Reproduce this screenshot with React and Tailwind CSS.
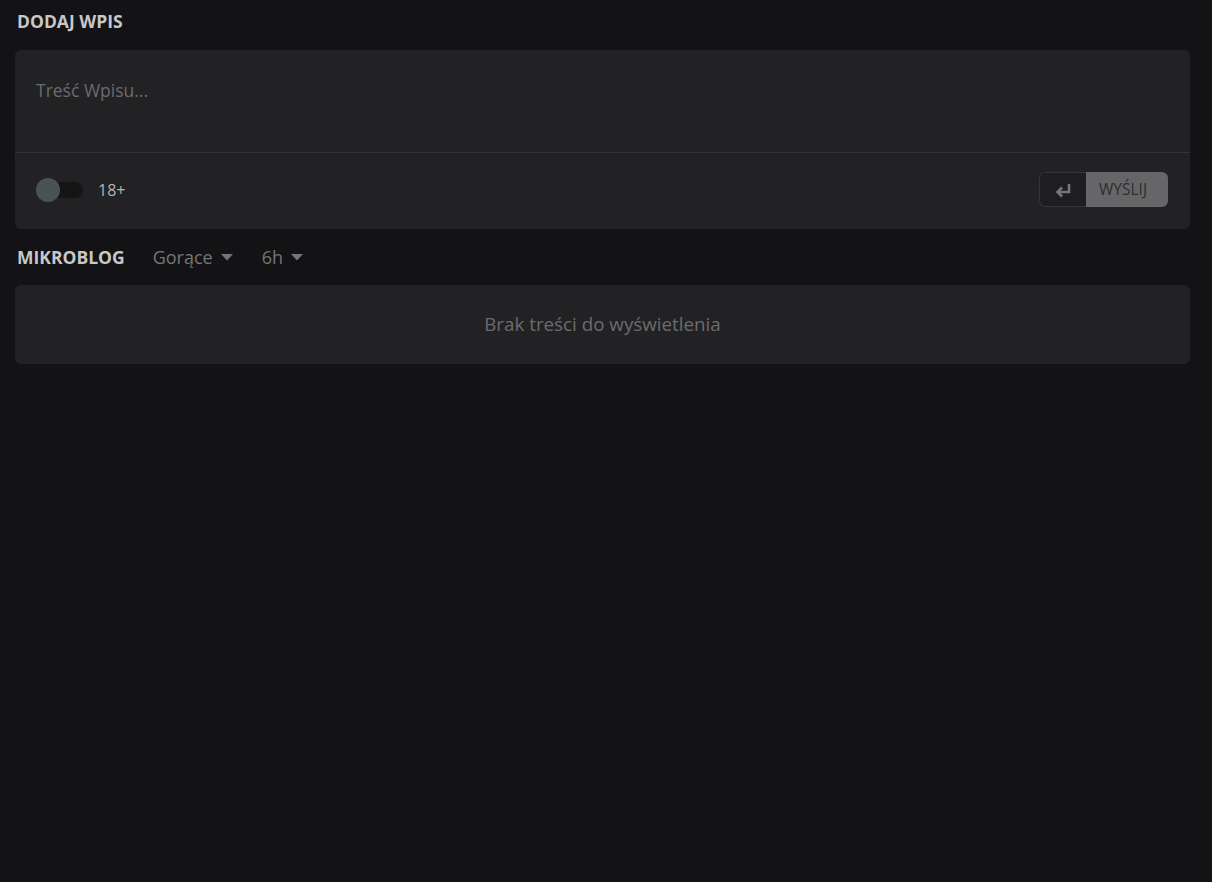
import React from "react";

const Caret = () => (
  <svg width="12" height="7" viewBox="0 0 12 7" className="ml-2" fill="currentColor">
    <path d="M0 0h12L6 6.5z" />
  </svg>
);

const EnterIcon = () => (
  <svg width="18" height="16" viewBox="0 0 18 16" fill="none" stroke="currentColor" strokeWidth="2.6">
    <path d="M15 2v8H4" />
    <path d="M8 5.5L3.5 10L8 14.5" />
  </svg>
);

const App = () => {
  return (
    <div
      className="min-h-[882px] bg-[#131315] pl-[15px] pr-[22px] pt-[8px]"
      style={{ fontFamily: '"Open Sans", "Noto Sans", sans-serif' }}
    >
      <h2 className="pl-[2px] text-[17.5px] font-bold leading-[26px] text-[#c8c8c8]">
        DODAJ WPIS
      </h2>

      <div className="mt-[16px] rounded-md bg-[#222224]">
        <div className="h-[103px] border-b border-[#333335] px-[21px] pt-[26px]">
          <p className="text-[17.5px] leading-[28px] text-[#6b6b6d]">Treść Wpisu...</p>
        </div>
        <div className="flex h-[76px] items-center justify-between pb-[3px] pl-[21px] pr-[22px]">
          <div className="flex items-center">
            <div className="relative h-[16px] w-[47px] rounded-full bg-[#151516]">
              <div className="absolute left-0 top-[-4px] h-[24px] w-[24px] rounded-full bg-[#4b5255]" />
            </div>
            <span className="ml-[15px] text-[16px] text-[#b4b4b4]">18+</span>
          </div>
          <div className="flex h-[35px] overflow-hidden rounded-md">
            <button className="flex w-[47px] items-center justify-center rounded-l-md border border-r-0 border-[#353537] bg-[#1e1e20] text-[#77777a]">
              <EnterIcon />
            </button>
            <button className="flex w-[82px] items-center justify-start bg-[#666668] pl-[13px] text-[15.5px] text-[#2e2e30]">
              WYŚLIJ
            </button>
          </div>
        </div>
      </div>

      <div className="mt-[14px] flex items-center pl-[2px] text-[18px] leading-[28px]">
        <span className="text-[17.5px] font-bold text-[#c8c8c8]">MIKROBLOG</span>
        <span className="ml-[28px] flex items-center text-[#757577]">
          Gorące
          <Caret />
        </span>
        <span className="ml-[29px] flex items-center text-[#757577]">
          6h
          <Caret />
        </span>
      </div>

      <div className="mt-[14px] flex h-[79px] items-center justify-center rounded-md bg-[#222224]">
        <p className="text-[18.8px] text-[#6b6b6d]">Brak treści do wyświetlenia</p>
      </div>
    </div>
  );
};

export default App;
